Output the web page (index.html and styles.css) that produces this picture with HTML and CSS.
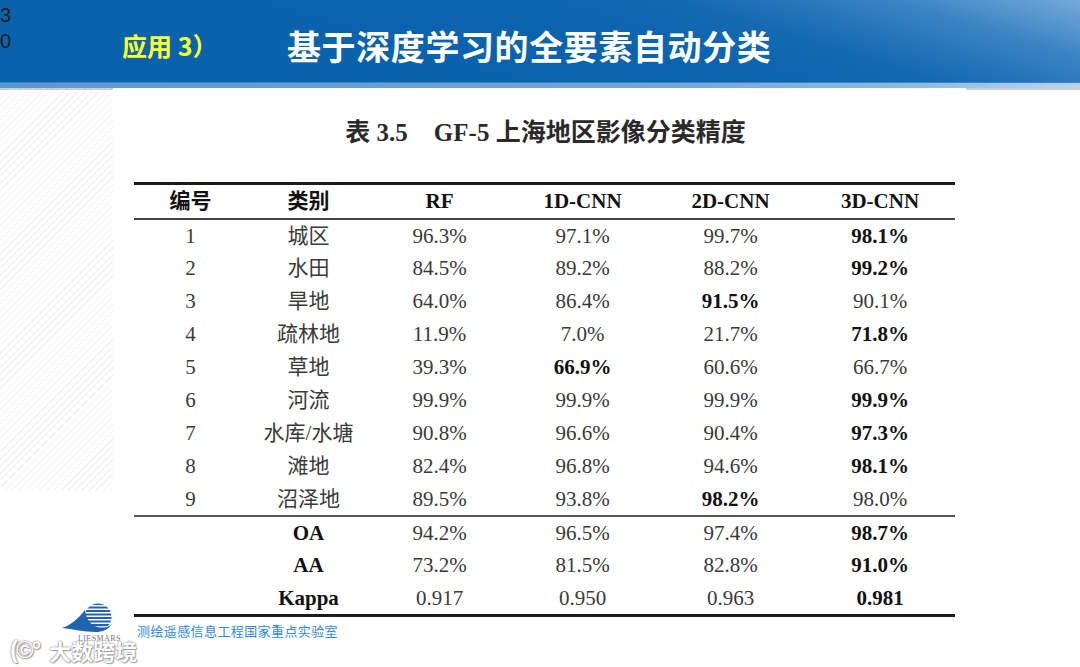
FILE: index.html
```html
<!DOCTYPE html>
<html lang="zh">
<head>
<meta charset="utf-8">
<link rel="stylesheet" href="styles.css">
</head>
<body>
<div class="slide">
  <header class="topbar">
    <div class="pageno">3<br>0</div>
    <div class="label">应用 3）</div>
    <h1 class="title">基于深度学习的全要素自动分类</h1>
  </header>
  <div class="strip"></div>
  <div class="stage">
    <div class="side side-left"><div class="hatch"></div></div>
    <div class="sheet">
      <div class="caption"><span>表 3.5</span><span class="gap"></span><span>GF-5 上海地区影像分类精度</span></div>
      <table class="acc">
        <colgroup>
          <col class="c1"><col class="c2"><col class="c3"><col class="c4"><col class="c5"><col class="c6">
        </colgroup>
        <thead>
          <tr><th>编号</th><th>类别</th><th>RF</th><th>1D-CNN</th><th>2D-CNN</th><th>3D-CNN</th></tr>
        </thead>
        <tbody class="classes">
          <tr><td>1</td><td>城区</td><td>96.3%</td><td>97.1%</td><td>99.7%</td><td class="b">98.1%</td></tr>
          <tr><td>2</td><td>水田</td><td>84.5%</td><td>89.2%</td><td>88.2%</td><td class="b">99.2%</td></tr>
          <tr><td>3</td><td>旱地</td><td>64.0%</td><td>86.4%</td><td class="b">91.5%</td><td>90.1%</td></tr>
          <tr><td>4</td><td>疏林地</td><td>11.9%</td><td>7.0%</td><td>21.7%</td><td class="b">71.8%</td></tr>
          <tr><td>5</td><td>草地</td><td>39.3%</td><td class="b">66.9%</td><td>60.6%</td><td>66.7%</td></tr>
          <tr><td>6</td><td>河流</td><td>99.9%</td><td>99.9%</td><td>99.9%</td><td class="b">99.9%</td></tr>
          <tr><td>7</td><td>水库/水塘</td><td>90.8%</td><td>96.6%</td><td>90.4%</td><td class="b">97.3%</td></tr>
          <tr><td>8</td><td>滩地</td><td>82.4%</td><td>96.8%</td><td>94.6%</td><td class="b">98.1%</td></tr>
          <tr><td>9</td><td>沼泽地</td><td>89.5%</td><td>93.8%</td><td class="b">98.2%</td><td>98.0%</td></tr>
        </tbody>
        <tbody class="summary">
          <tr><td></td><td class="b">OA</td><td>94.2%</td><td>96.5%</td><td>97.4%</td><td class="b">98.7%</td></tr>
          <tr><td></td><td class="b">AA</td><td>73.2%</td><td>81.5%</td><td>82.8%</td><td class="b">91.0%</td></tr>
          <tr><td></td><td class="b">Kappa</td><td>0.917</td><td>0.950</td><td>0.963</td><td class="b">0.981</td></tr>
        </tbody>
      </table>
    </div>
    <div class="side side-right"></div>
  </div>

  <div class="footer">
    <svg class="logo" width="76" height="52" viewBox="0 0 76 52">
      <defs>
        <clipPath id="globe"><circle cx="40" cy="25" r="13.5"/></clipPath>
      </defs>
      <g clip-path="url(#globe)" fill="#1f63b3">
        <rect x="20" y="11" width="40" height="2"/>
        <rect x="20" y="14.5" width="40" height="2"/>
        <rect x="20" y="18" width="40" height="2"/>
        <rect x="20" y="21.5" width="40" height="2"/>
        <rect x="20" y="25" width="40" height="2"/>
        <rect x="20" y="28.5" width="40" height="2"/>
        <rect x="20" y="32" width="40" height="2.2"/>
        <rect x="20" y="35.5" width="40" height="2.5"/>
      </g>
      <path d="M4 36 C13 33 20 27 27 18 C28 28 34 36 45 36 C49 35.5 52 34 54 32 C50 38 44 40 38 40 C26 40 15 37 4 36 Z" fill="#1f63b3"/>
      <text x="20" y="49" class="logo-txt">LIESMARS</text>
    </svg>
    <div class="lab">测绘遥感信息工程国家重点实验室</div>
  </div>
  <div class="watermark"><span class="wm-mark">(©°</span><span class="wm-text">大数跨境</span></div>
</div>
</body>
</html>
```

FILE: styles.css
```css
* { box-sizing: border-box; }
html, body {
  margin: 0;
  padding: 0;
  background: #ffffff;
}
.slide {
  position: relative;
  width: 1080px;
  height: 667px;
  overflow: hidden;
  background: #ffffff;
  font-family: "Liberation Serif", "Noto Sans CJK SC", serif;
}
.topbar {
  height: 82px;
  display: flex;
  align-items: center;
  background: linear-gradient(197deg, #74a9d8 0%, #3b84c4 14%, #1469b2 30%, #0b63ad 45%, #0b62ac 100%);
}
.pageno {
  align-self: flex-start;
  width: 122px;
  padding-top: 2px;
  font-family: "Liberation Sans", Arial, sans-serif;
  font-size: 20px;
  line-height: 26px;
  color: #1e1e1e;
}
.label {
  width: 165px;
  margin-top: 8px;
  font-family: "Noto Sans CJK SC", sans-serif;
  font-weight: 700;
  font-size: 25px;
  color: #ffff2e;
}
.title {
  margin: 8px 0 0 0;
  font-family: "Noto Sans CJK SC", sans-serif;
  font-weight: 700;
  font-size: 34px;
  letter-spacing: 0.6px;
  color: #ffffff;
}
.strip {
  height: 6px;
  background: linear-gradient(to right, #5a98d0 0%, #6ea6d9 60%, #8cbbe3 85%, #b8d4ee 100%);
  border-top: 1px solid #3a82c3;
}
.stage {
  display: flex;
}
.side {
  padding-top: 1px;
}
.side-left {
  width: 113px;
  border-top: 2px solid #cdcdcd;
}
.hatch {
  height: 400px;
  background: repeating-linear-gradient(135deg, #f2f2f2 0 1px, #ffffff 1px 5px);
}
.side-right {
  flex: 1;
  border-top: 2px solid #cdcdcd;
  align-self: flex-start;
}
.sheet {
  width: 853px;
  padding: 28px 0 0 21px;
  background: #ffffff;
}
.caption {
  width: 821px;
  display: flex;
  justify-content: center;
  font-weight: 700;
  font-size: 25px;
  line-height: 34px;
  color: #2a2a2a;
  white-space: pre;
  padding-left: 2px;
}
.caption .gap {
  width: 26px;
}
.acc {
  margin-top: 32px;
  width: 821px;
  border-collapse: collapse;
  table-layout: fixed;
  border-top: 3px solid #1a1a1a;
  border-bottom: 3px solid #1a1a1a;
  font-size: 21px;
  color: #3a3a3a;
}
.c1 { width: 113px; }
.c2 { width: 123px; }
.c3 { width: 139px; }
.c4 { width: 147px; }
.c5 { width: 149px; }
.c6 { width: 150px; }
.acc th,
.acc td {
  padding: 0;
  text-align: center;
  white-space: nowrap;
  line-height: 32px;
}
.acc thead tr { height: 35px; }
.acc .classes tr { height: 33px; }
.acc .summary tr { height: 33px; }
.acc thead tr {
  border-bottom: 2px solid #444;
}
.acc th {
  font-weight: 700;
  color: #111;
}
.acc .classes tr:last-child {
  border-bottom: 2px solid #555;
}
.acc td.b {
  font-weight: 700;
  color: #111;
}
.footer {
  position: absolute;
  left: 58px;
  top: 592px;
  display: flex;
  align-items: flex-start;
}
.logo {
  display: block;
}
.logo-txt {
  font-family: "Liberation Serif", serif;
  font-size: 8px;
  fill: #777;
  letter-spacing: 0.4px;
}
.lab {
  margin: 31px 0 0 3px;
  font-family: "Noto Sans CJK SC", sans-serif;
  font-size: 13px;
  line-height: 16px;
  color: #3089e4;
  letter-spacing: 0.4px;
}
.watermark {
  position: absolute;
  left: 10px;
  top: 634px;
  display: flex;
  align-items: center;
  gap: 10px;
  color: #ffffff;
  text-shadow: 0 0 1px #777, 0 0 2px #999, 1px 1px 1px #aaa;
}
.wm-mark {
  font-family: "Liberation Sans", sans-serif;
  font-size: 24px;
  font-weight: 700;
  letter-spacing: -2px;
}
.wm-text {
  font-family: "Noto Sans CJK SC", sans-serif;
  font-size: 22px;
  font-weight: 700;
  letter-spacing: 0;
}
```
